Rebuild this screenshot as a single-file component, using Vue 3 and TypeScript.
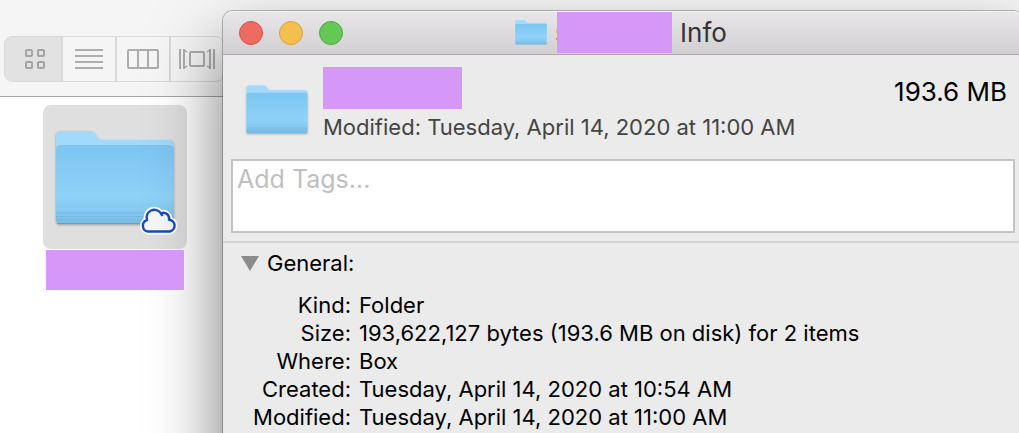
<script setup lang="ts">
interface Detail {
  label: string
  value: string
}

const details: Detail[] = [
  { label: 'Kind:', value: 'Folder' },
  { label: 'Size:', value: '193,622,127 bytes (193.6 MB on disk) for 2 items' },
  { label: 'Where:', value: 'Box' },
  { label: 'Created:', value: 'Tuesday, April 14, 2020 at 10:54 AM' },
  { label: 'Modified:', value: 'Tuesday, April 14, 2020 at 11:00 AM' },
]
</script>

<template>
  <div class="desktop">
    <svg class="defs" width="0" height="0" aria-hidden="true">
      <defs>
        <linearGradient id="folder-front" x1="0" y1="0" x2="0" y2="1">
          <stop offset="0" stop-color="#7cc5f2" />
          <stop offset="0.65" stop-color="#8fd2f7" />
          <stop offset="0.85" stop-color="#86c9f1" />
          <stop offset="1" stop-color="#79bce6" />
        </linearGradient>
        <symbol id="folder" viewBox="0 0 120 95" preserveAspectRatio="none">
          <path d="M1 88V6Q1 1 6 1H35Q38 1 40 4L44 9Q45 10 47 10H114Q119 10 119 15V88Z" fill="#a2dafc" />
          <path d="M1 20Q1 15 6 15H114Q119 15 119 20V90Q119 93 116 93H4Q1 93 1 90Z" fill="url(#folder-front)" />
          <path d="M1 83H119M1 86.500H119M1 90H119" stroke="#6db4df" stroke-width="1" opacity="0.7" />
          <path d="M2 93.500H118" stroke="#659fc6" stroke-width="1" />
        </symbol>
      </defs>
    </svg>

    <main class="finder">
      <header class="toolbar">
        <div class="views">
          <button class="view active" type="button" aria-label="Icon view">
            <svg width="20" height="20" viewBox="0 0 20 20" fill="none" stroke="#a3a3a3" stroke-width="2">
              <rect x="1" y="1" width="6" height="6" rx="1" /><rect x="13" y="1" width="6" height="6" rx="1" />
              <rect x="1" y="13" width="6" height="6" rx="1" /><rect x="13" y="13" width="6" height="6" rx="1" />
            </svg>
          </button>
          <button class="view" type="button" aria-label="List view">
            <svg width="28" height="20" viewBox="0 0 28 20" stroke="#adadad" stroke-width="2">
              <path d="M0 1H28M0 7H28M0 13H28M0 19H28" />
            </svg>
          </button>
          <button class="view" type="button" aria-label="Column view">
            <svg width="32" height="20" viewBox="0 0 32 20" fill="none" stroke="#adadad" stroke-width="2">
              <rect x="1" y="1" width="30" height="18" rx="1" /><path d="M11 1V19M21 1V19" />
            </svg>
          </button>
          <button class="view" type="button" aria-label="Gallery view">
            <svg width="36" height="20" viewBox="0 0 36 20" fill="none" stroke="#adadad" stroke-width="2">
              <rect x="11" y="3" width="14" height="14" rx="1" />
              <path d="M1 0V20M35 0V20M5 0V20M31 0V20" />
              <path d="M5 1L8 3M5 19L8 17M31 1L28 3M31 19L28 17" stroke-width="1.500" />
            </svg>
          </button>
        </div>
      </header>
      <section class="files">
        <figure class="file">
          <div class="tile">
            <svg class="large-folder" role="img" aria-label="Folder"><use href="#folder" /></svg>
            <svg class="cloud" viewBox="0 0 40 28" aria-hidden="true">
              <path d="M9 24.500A5.800 5.800 0 0 1 8 13.200A7.800 7.800 0 0 1 22 6.500A5.600 5.600 0 0 1 30 12.700A6 6 0 0 1 31 24.500Z" fill="#fff" stroke="#fff" stroke-width="6" stroke-linejoin="round" />
              <path d="M9 24.500A5.800 5.800 0 0 1 8 13.200A7.800 7.800 0 0 1 22 6.500A5.600 5.600 0 0 1 30 12.700A6 6 0 0 1 31 24.500Z" fill="#f7f7f8" stroke="#164cc0" stroke-width="2.400" stroke-linejoin="round" />
              <path d="M22 6.500L23.500 9" stroke="#164cc0" stroke-width="2.400" />
            </svg>
          </div>
          <figcaption class="redacted file-name"></figcaption>
        </figure>
      </section>
    </main>

    <article class="info">
      <header class="titlebar">
        <div class="lights">
          <button class="light close" type="button" aria-label="Close"></button>
          <button class="light minimize" type="button" aria-label="Minimize"></button>
          <button class="light zoom" type="button" aria-label="Zoom"></button>
        </div>
        <h1 class="title">
          <svg class="small-folder" aria-hidden="true"><use href="#folder" /></svg>
          <span class="title-start">s</span>
          <span class="redacted title-name"></span>
          <span>Info</span>
        </h1>
      </header>

      <section class="summary">
        <svg class="medium-folder" aria-hidden="true"><use href="#folder" /></svg>
        <div class="identity">
          <div class="redacted item-name"></div>
          <p class="modified">Modified: Tuesday, April 14, 2020 at 11:00 AM</p>
        </div>
        <strong class="size">193.6 MB</strong>
      </section>

      <div class="tags">
        <textarea aria-label="Tags" placeholder="Add Tags..."></textarea>
      </div>

      <section class="general">
        <h2>
          <button class="disclosure" type="button" aria-expanded="true">
            <svg width="18" height="15" viewBox="0 0 18 15" aria-hidden="true"><path d="M0 0H18L9 15Z" fill="#8c8c8c" /></svg>
            General:
          </button>
        </h2>
        <table>
          <tbody>
            <tr v-for="item in details" :key="item.label">
              <th scope="row">{{ item.label }}</th>
              <td>{{ item.value }}</td>
            </tr>
          </tbody>
        </table>
      </section>
    </article>
  </div>
</template>

<style>
body {
  margin: 0;
}
</style>

<style scoped>
.desktop {
  position: relative;
  min-height: 100vh;
  overflow: hidden;
  font-family: Inter, "Liberation Sans", sans-serif;
  font-size: 22px;
  line-height: 28px;
  color: #000;
}
.desktop * {
  box-sizing: border-box;
}
.defs {
  position: absolute;
}
button {
  margin: 0;
  padding: 0;
  border: 0;
  background: none;
  font: inherit;
  color: inherit;
}
.redacted {
  display: block;
  flex: none;
  background: #d597f8;
}
.finder {
  display: flex;
  flex-direction: column;
  min-height: 100vh;
  background: #fff;
}
.toolbar {
  display: flex;
  padding: 36px 4px 14px;
  background: #f5f5f5;
  border-bottom: 1px solid #a3a3a3;
}
.views {
  display: flex;
  border: 1px solid #d9d9d9;
  border-radius: 8px;
  overflow: hidden;
}
.view {
  display: flex;
  align-items: center;
  justify-content: center;
  width: 54px;
  height: 44px;
  border-right: 2px solid #d9d9d9;
}
.view.active {
  width: 58px;
  padding-left: 4px;
  background: #e2e2e2;
}
.view:last-child {
  width: 52px;
  border-right: 0;
}
.files {
  padding: 8px 43px;
}
.file {
  display: flex;
  flex-direction: column;
  align-items: center;
  width: 144px;
  margin: 0;
  gap: 1px;
}
.tile {
  position: relative;
  display: flex;
  align-items: center;
  justify-content: center;
  width: 144px;
  height: 144px;
  border-radius: 8px;
  background: #dfdfdf;
}
.large-folder {
  width: 120px;
  height: 95px;
  filter: drop-shadow(0 1px 1px rgba(0, 0, 0, 0.3));
}
.cloud {
  position: absolute;
  right: 8px;
  bottom: 14px;
  width: 40px;
  height: 28px;
  overflow: visible;
}
.file-name {
  position: relative;
  z-index: 2;
  width: 138px;
  height: 40px;
}
.info {
  position: absolute;
  z-index: 1;
  top: 11px;
  left: 223px;
  right: -4px;
  min-height: calc(100vh + 40px);
  border-radius: 10px 10px 0 0;
  background: #ebebeb;
  box-shadow: 0 0 0 1px rgba(0, 0, 0, 0.25), 0 36px 70px rgba(0, 0, 0, 0.55);
}
.titlebar {
  display: grid;
  grid-template-columns: 1fr auto 1fr;
  align-items: center;
  height: 44px;
  padding: 0 20px 0 16px;
  border-radius: 10px 10px 0 0;
  border-bottom: 1px solid #acaaac;
  background: linear-gradient(#e9e7e9, #d1cfd1);
  box-shadow: inset 0 1px 0 #f6f5f6;
}
.lights {
  display: flex;
  gap: 16px;
}
.light {
  width: 24px;
  height: 24px;
  border: 1px solid;
  border-radius: 50%;
}
.close {
  background: #ed6b60;
  border-color: #d35549;
}
.minimize {
  background: #f5bf50;
  border-color: #d8a13f;
}
.zoom {
  background: #63c856;
  border-color: #51a73f;
}
.title {
  display: flex;
  align-items: center;
  margin: 0;
  font-size: 26px;
  font-weight: 400;
  color: #333;
}
.small-folder {
  width: 32px;
  height: 25px;
  margin-right: 8px;
}
.title-start {
  width: 2px;
}
.title-name {
  position: relative;
  width: 115px;
  height: 41px;
  margin-right: 8px;
}
.summary {
  display: flex;
  align-items: flex-start;
  padding: 12px 16px 0 23px;
}
.medium-folder {
  flex: none;
  width: 62px;
  height: 49px;
  margin: 18px 15px 0 0;
  filter: drop-shadow(0 1px 1px rgba(0, 0, 0, 0.2));
}
.identity {
  flex: 1;
}
.item-name {
  width: 139px;
  height: 42px;
}
.modified {
  margin: 4px 0 0;
  color: #444;
}
.size {
  margin-top: 11px;
  font-size: 26px;
  font-weight: 400;
}
.tags {
  padding: 18px 8px 8px;
  border-bottom: 2px solid #d3d3d3;
}
textarea {
  display: block;
  width: 100%;
  height: 74px;
  padding: 4px 4px;
  border: 2px solid #c3c3c3;
  border-radius: 0;
  outline: 0;
  resize: none;
  background: #fff;
  font: inherit;
  font-size: 25px;
}
textarea::placeholder {
  color: #bfbfbf;
  opacity: 1;
}
.general {
  padding: 6px 18px;
}
h2 {
  margin: 0 0 14px;
  font-size: 22px;
  font-weight: 400;
}
.disclosure {
  display: flex;
  align-items: center;
  gap: 8px;
}
table {
  border-collapse: collapse;
}
th,
td {
  padding: 0;
  font-weight: 400;
  text-align: left;
}
th {
  width: 110px;
  text-align: right;
}
td {
  padding-left: 8px;
}
</style>
